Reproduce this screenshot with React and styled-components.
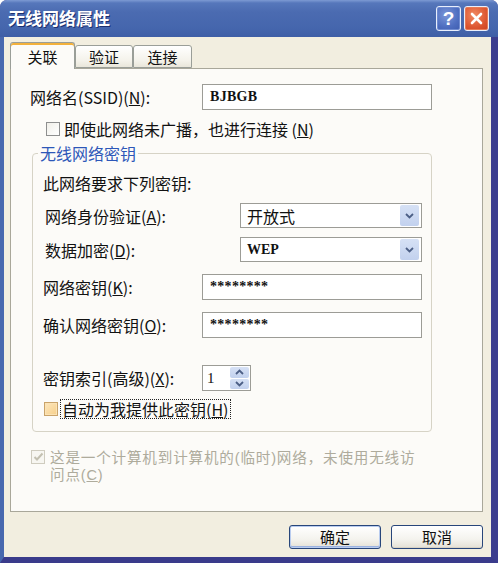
import React from 'react';
import styled, { createGlobalStyle } from 'styled-components';

const Global = createGlobalStyle`
  html, body { margin: 0; padding: 0; background: #ffffff; }
  body { font-family: "Noto Sans CJK SC", "Noto Sans", sans-serif; color: #111; }
  * { box-sizing: border-box; }
`;

const Window = styled.div`
  width: 498px;
  height: 563px;
  display: flex;
  flex-direction: column;
  background: #3c3e8e;
  border-radius: 7px 7px 0 0;
  overflow: hidden;
`;

const TitleBar = styled.div`
  height: 37px;
  flex: none;
  display: flex;
  align-items: center;
  padding: 0 9px 0 8px;
  background: linear-gradient(#7d9ad3 0px, #5677bb 3px, #4b6bb1 12px, #4566ad 28px, #3e5ea6 37px);
`;

const TitleText = styled.div`
  flex: 1;
  color: #ffffff;
  font-size: 17px;
  font-weight: 700;
  line-height: 20px;
  text-shadow: 1px 1px 0 #1c2f6e;
  padding-bottom: 2px;
`;

const CaptionButton = styled.div`
  width: 25px;
  height: 25px;
  margin-left: 3px;
  border: 1px solid #e8eefc;
  border-radius: 3px;
  display: flex;
  align-items: center;
  justify-content: center;
  color: #fff;
  font-family: "Liberation Sans", Arial, sans-serif;
  font-size: 19px;
  font-weight: 700;
  background: ${p => p.$close
    ? 'radial-gradient(circle at 40% 35%, #f08a63, #dd5732 60%, #c9401f)'
    : 'radial-gradient(circle at 40% 35%, #7b97d8, #4e6ec0 60%, #3e5cae)'};
  box-shadow: inset 0 0 0 1px ${p => (p.$close ? '#e77b57' : '#6f8bd0')};
`;

const Body = styled.div`
  flex: 1;
  display: flex;
  flex-direction: column;
  background: #f2eee0;
  border-left: 4px solid #4868ae;
  border-right: 7px solid #3c3d8f;
  border-bottom: 6px solid #3a3b8b;
  padding: 5px 8px 8px 6px;
`;

const TabStrip = styled.div`
  height: 26px;
  display: flex;
  align-items: flex-end;
  flex: none;
`;

const Tab = styled.div`
  position: relative;
  z-index: ${p => (p.$active ? 2 : 1)};
  width: ${p => p.$w}px;
  height: ${p => (p.$active ? 27 : 23)}px;
  margin-bottom: ${p => (p.$active ? -1 : 0)}px;
  border: 1px solid #9a9e98;
  border-bottom: ${p => (p.$active ? 'none' : '1px solid #9a9e98')};
  border-radius: 3px 3px 0 0;
  background: ${p => (p.$active ? '#fcfbf8' : 'linear-gradient(#ffffff, #f4f2ea 70%, #e9e6da)')};
  box-shadow: ${p => (p.$active ? 'inset 0 2px 0 #f3b13c' : 'none')};
  display: flex;
  align-items: center;
  justify-content: center;
  font-size: 15px;
  line-height: 18px;
  padding-top: ${p => (p.$active ? 2 : 1)}px;
`;

const Panel = styled.div`
  flex: 1;
  border: 1px solid #a9a79a;
  background: #fcfbf8;
  padding: 15px 0 0 19px;
  display: flex;
  flex-direction: column;
`;

const Row = styled.div`
  display: flex;
  align-items: center;
  height: ${p => p.$h || 20}px;
  margin-top: ${p => p.$mt || 0}px;
  padding-left: ${p => p.$pl || 0}px;
  gap: ${p => p.$gap || 0}px;
`;

const Label = styled.div`
  width: ${p => p.$w}px;
  flex: none;
  font-size: 16px;
  line-height: 20px;
  white-space: nowrap;
`;

const Text = styled.div`
  font-size: 16px;
  line-height: 20px;
  white-space: nowrap;
`;

const Focus = styled.span`
  outline: 1px dotted #222;
  outline-offset: 0;
  padding: 0 1px;
  font-size: 16px;
  line-height: 18px;
  white-space: nowrap;
`;

const TextBox = styled.div`
  width: ${p => p.$w}px;
  height: ${p => p.$h || 26}px;
  flex: none;
  background: #ffffff;
  border: 1px solid #9c9c96;
  display: flex;
  align-items: center;
  padding-left: 7px;
  font-family: "Liberation Serif", "Times New Roman", serif;
  font-weight: 700;
  font-size: 14px;
  letter-spacing: 0.3px;
`;

const SelectBox = styled.div`
  width: 182px;
  height: 25px;
  flex: none;
  background: #ffffff;
  border: 1px solid #9c9c96;
  display: flex;
  align-items: center;
  padding: 0 2px 0 6px;
`;

const SelectValue = styled.div`
  flex: 1;
  font-size: ${p => (p.$latin ? 14 : 16)}px;
  font-family: ${p => (p.$latin ? '"Liberation Serif", serif' : '"Noto Sans CJK SC", sans-serif')};
  font-weight: ${p => (p.$latin ? 700 : 400)};
  line-height: 20px;
`;

const ArrowButton = styled.div`
  width: 19px;
  height: 21px;
  background: linear-gradient(#d6e1f5, #c2d1ee);
  border-radius: 2px;
  display: flex;
  align-items: center;
  justify-content: center;
`;

const SpinBox = styled.div`
  width: 49px;
  height: 26px;
  flex: none;
  background: #fff;
  border: 1px solid #9c9c96;
  display: flex;
  align-items: center;
  padding: 1px 1px 1px 4px;
`;

const SpinValue = styled.div`
  flex: 1;
  font-family: "Liberation Serif", serif;
  font-size: 15px;
`;

const SpinButtons = styled.div`
  width: 19px;
  height: 22px;
  display: flex;
  flex-direction: column;
  gap: 1px;
`;

const SpinHalf = styled.div`
  flex: 1;
  background: linear-gradient(#d6e1f5, #c2d1ee);
  border-radius: 2px;
  display: flex;
  align-items: center;
  justify-content: center;
`;

const Check = styled.span`
  width: 14px;
  height: 14px;
  flex: none;
  display: inline-flex;
  align-items: center;
  justify-content: center;
  border: 1px solid ${p => (p.$variant === 'hot' ? '#c9a36a' : p.$variant === 'disabled' ? '#cfccbf' : '#8e8f8f')};
  background: ${p => (p.$variant === 'hot'
    ? 'linear-gradient(135deg, #fde7bd, #f6cf8a)'
    : p.$variant === 'disabled' ? '#f7f6f1' : 'linear-gradient(135deg, #f0efe9, #ffffff)')};
  box-shadow: ${p => (p.$variant === 'hot' ? 'inset 0 0 0 1px #fbe3b5' : 'none')};
`;

const GroupBox = styled.fieldset`
  width: 400px;
  margin: 6px 0 0 2px;
  padding: 12px 9px 13px 10px;
  border: 1px solid #d6d3c6;
  border-radius: 4px;
  min-inline-size: 0;
`;

const Legend = styled.legend`
  color: #2d57b8;
  font-size: 16px;
  line-height: 16px;
  padding: 0 2px;
  margin-left: -5px;
`;

const Disabled = styled.div`
  display: flex;
  align-items: flex-start;
  gap: 5px;
  margin-top: 18px;
  padding-left: 1px;
`;

const DisabledText = styled.div`
  display: flex;
  flex-direction: column;
  font-family: "Liberation Sans", "Noto Sans CJK SC", sans-serif;
  font-size: 14.6px;
  letter-spacing: 0.8px;
  color: #aeab9c;
`;

const DisabledLine = styled.div`
  height: 17px;
  line-height: 17px;
  white-space: nowrap;
`;

const ButtonRow = styled.div`
  display: flex;
  justify-content: flex-end;
  gap: 10px;
  margin-top: 13px;
  flex: none;
`;

const Button = styled.div`
  width: 92px;
  height: 24px;
  border: 1px solid #28467a;
  border-radius: 3px;
  display: flex;
  align-items: center;
  justify-content: center;
  font-size: 15px;
  line-height: 18px;
  background: linear-gradient(#ffffff, #f4f3ee 60%, #e4e0d5);
  box-shadow: ${p => (p.$default ? 'inset 0 0 0 1px #b9ccef, inset 0 -1px 0 1px #9bb2e0' : 'inset 0 -1px 0 #d8d2c4')};
`;

const Chevron = ({ up }) => (
  <svg width="9" height="6" viewBox="0 0 9 6">
    <polyline
      points={up ? '1,5 4.5,1.5 8,5' : '1,1 4.5,4.5 8,1'}
      fill="none"
      stroke="#4c5f86"
      strokeWidth="1.8"
    />
  </svg>
);

const CheckMark = () => (
  <svg width="11" height="10" viewBox="0 0 11 10">
    <polyline points="1.5,5 4,7.5 9.5,1.5" fill="none" stroke="#c3c0b1" strokeWidth="2" />
  </svg>
);

const CloseX = () => (
  <svg width="13" height="13" viewBox="0 0 13 13">
    <path d="M2 2 L11 11 M11 2 L2 11" stroke="#ffffff" strokeWidth="2.6" strokeLinecap="round" />
  </svg>
);

export default function App() {
  return (
    <>
      <Global />
      <Window>
        <TitleBar>
          <TitleText>无线网络属性</TitleText>
          <CaptionButton>?</CaptionButton>
          <CaptionButton $close><CloseX /></CaptionButton>
        </TitleBar>
        <Body>
          <TabStrip>
            <Tab $active $w={65}>关联</Tab>
            <Tab $w={58}>验证</Tab>
            <Tab $w={59}>连接</Tab>
          </TabStrip>
          <Panel>
            <Row $h={26}>
              <Label $w={172}>网络名(SSID)(<u>N</u>):</Label>
              <TextBox $w={230}>BJBGB</TextBox>
            </Row>
            <Row $mt={9} $pl={16} $gap={4}>
              <Check />
              <Text>即使此网络未广播，也进行连接 (<u>N</u>)</Text>
            </Row>
            <GroupBox>
              <Legend>无线网络密钥</Legend>
              <Row>
                <Text>此网络要求下列密钥:</Text>
              </Row>
              <Row $h={25} $mt={10} $pl={2}>
                <Label $w={195}>网络身份验证(<u>A</u>):</Label>
                <SelectBox>
                  <SelectValue>开放式</SelectValue>
                  <ArrowButton><Chevron /></ArrowButton>
                </SelectBox>
              </Row>
              <Row $h={25} $mt={9} $pl={2}>
                <Label $w={195}>数据加密(<u>D</u>):</Label>
                <SelectBox>
                  <SelectValue $latin>WEP</SelectValue>
                  <ArrowButton><Chevron /></ArrowButton>
                </SelectBox>
              </Row>
              <Row $h={26} $mt={12}>
                <Label $w={159}>网络密钥(<u>K</u>):</Label>
                <TextBox $w={220}>********</TextBox>
              </Row>
              <Row $h={26} $mt={12}>
                <Label $w={159}>确认网络密钥(<u>O</u>):</Label>
                <TextBox $w={220}>********</TextBox>
              </Row>
              <Row $h={26} $mt={27}>
                <Label $w={159}>密钥索引(高级)(<u>X</u>):</Label>
                <SpinBox>
                  <SpinValue>1</SpinValue>
                  <SpinButtons>
                    <SpinHalf><Chevron up /></SpinHalf>
                    <SpinHalf><Chevron /></SpinHalf>
                  </SpinButtons>
                </SpinBox>
              </Row>
              <Row $h={18} $mt={9} $pl={1} $gap={3}>
                <Check $variant="hot" />
                <Focus>自动为我提供此密钥(<u>H</u>)</Focus>
              </Row>
            </GroupBox>
            <Disabled>
              <Check $variant="disabled"><CheckMark /></Check>
              <DisabledText>
                <DisabledLine>这是一个计算机到计算机的(临时)网络，未使用无线访</DisabledLine>
                <DisabledLine>问点(<u>C</u>)</DisabledLine>
              </DisabledText>
            </Disabled>
          </Panel>
          <ButtonRow>
            <Button $default>确定</Button>
            <Button>取消</Button>
          </ButtonRow>
        </Body>
      </Window>
    </>
  );
}
